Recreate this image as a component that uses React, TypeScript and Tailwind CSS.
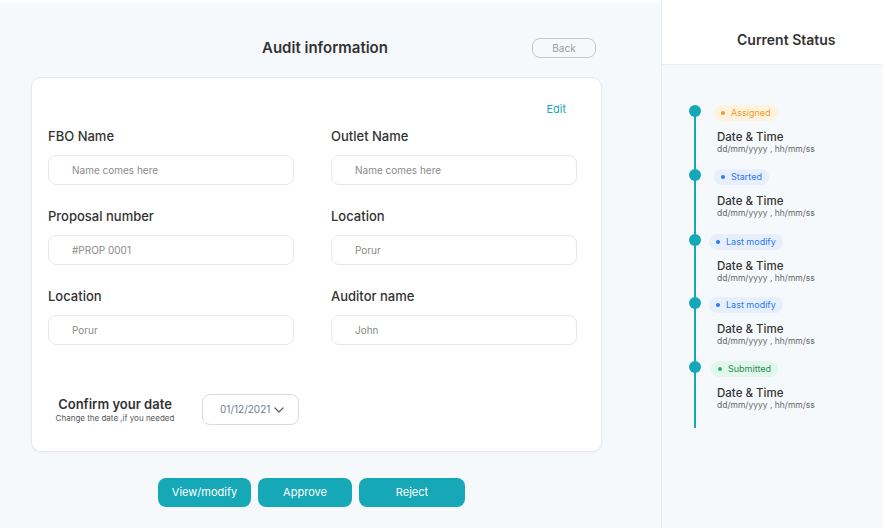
import React from 'react';

const fields = [
  { label: 'FBO Name', value: 'Name comes here' },
  { label: 'Outlet Name', value: 'Name comes here' },
  { label: 'Proposal number', value: '#PROP 0001' },
  { label: 'Location', value: 'Porur' },
  { label: 'Location', value: 'Porur' },
  { label: 'Auditor name', value: 'John' },
];

const statuses = [
  { name: 'Assigned', badge: 'bg-[#fff3de] text-[#f39a2d]', dot: 'bg-[#f39a2d]', shift: 'ml-[13px]', gap: 'h-[64px]' },
  { name: 'Started', badge: 'bg-[#e7effd] text-[#2979f2]', dot: 'bg-[#2979f2]', shift: 'ml-[13px]', gap: 'h-[65px]' },
  { name: 'Last modify', badge: 'bg-[#e7effd] text-[#2979f2]', dot: 'bg-[#2979f2]', shift: 'ml-[8px]', gap: 'h-[63px]' },
  { name: 'Last modify', badge: 'bg-[#e7effd] text-[#2979f2]', dot: 'bg-[#2979f2]', shift: 'ml-[8px]', gap: 'h-[64px]' },
  { name: 'Submitted', badge: 'bg-[#e3f6ec] text-[#1e8f55]', dot: 'bg-[#22b46a]', shift: 'ml-[10px]', gap: 'h-[64px]' },
];

const App: React.FC = () => {
  return (
    <div className="flex h-[528px] w-[883px] overflow-hidden bg-[#f6f9fc] font-['Inter',sans-serif] text-[#333]">
      {/* audit form */}
      <div className="flex w-[661px] flex-col">
        <div className="h-[5px] bg-gradient-to-b from-white to-[#f6f9fc]" />
        <div className="mt-[33px] flex h-5 items-center pl-[262px] pr-[65px]">
          <h1 className="text-[15px] font-semibold text-[#333]">Audit information</h1>
          <button className="ml-auto h-5 w-[64px] rounded-[8px] border border-[#c9c9c9] text-[10px] text-[#9a9a9a]">
            Back
          </button>
        </div>

        <div className="ml-[31px] mt-[19px] h-[375px] w-[571px] rounded-[10px] border border-[#e6e9ee] bg-white pl-[16px] pt-[25px] shadow-[0_1px_3px_rgba(0,0,0,0.04)]">
          <div className="flex h-3 justify-end pr-[35px]">
            <span className="text-[11px] leading-3 text-[#1ea6b8]">Edit</span>
          </div>
          <div className="mt-[12px] grid w-[529px] grid-cols-2 gap-x-[37px] gap-y-[22px]">
            {fields.map((f, i) => (
              <div key={i}>
                <div className="h-[18px] text-[13px] font-medium leading-[18px] text-[#333]">{f.label}</div>
                <div className="mt-[10px] flex h-[30px] items-center rounded-[8px] border border-[#e6e8ec] pl-[23px] text-[10px] text-[#8a8a8a]">
                  {f.value}
                </div>
              </div>
            ))}
          </div>

          <div className="mt-[49px] flex items-center">
            <div className="w-[134px] text-center">
              <div className="text-[13px] font-semibold leading-4 text-[#333]">Confirm your date</div>
              <div className="mt-[1px] text-[8px] leading-[10px] text-[#555]">Change the date ,if you needed</div>
            </div>
            <div className="ml-[20px] flex h-[31px] w-[97px] items-center rounded-[8px] border border-[#d5dce7] pl-[17px] pr-[14px]">
              <span className="text-[10px] text-[#737d94]">01/12/2021</span>
              <svg className="ml-auto" width="10" height="6" viewBox="0 0 10 6" fill="none">
                <path d="M1 1l4 4 4-4" stroke="#5a5f6e" strokeWidth="1.2" strokeLinecap="round" strokeLinejoin="round" />
              </svg>
            </div>
          </div>
        </div>

        <div className="ml-[158px] mt-[26px] flex gap-[7px]">
          {[
            { t: 'View/modify', w: 'w-[93px]' },
            { t: 'Approve', w: 'w-[94px]' },
            { t: 'Reject', w: 'w-[106px]' },
          ].map((b) => (
            <button key={b.t} className={`h-[29px] ${b.w} rounded-[8px] bg-[#17a8b8] text-[11px] text-white`}>
              {b.t}
            </button>
          ))}
        </div>
      </div>

      {/* status panel */}
      <div className="flex w-[222px] flex-col border-l border-[#e8ebef]">
        <div className="h-[65px] border-b border-[#eceef1] bg-white pl-[75px] pt-[31px]">
          <h2 className="text-[14px] font-semibold leading-[18px] text-[#333]">Current Status</h2>
        </div>
        <div className="relative ml-[27px] mt-[40px]">
          <div className="absolute left-[5px] top-[6px] h-[317px] w-[2px] bg-[#17a8b8]" />
          {statuses.map((s, i) => (
            <div key={i} className={`relative flex ${s.gap}`}>
              <div className="h-3 w-3 shrink-0 rounded-full bg-[#17a8b8]" />
              <div className="flex flex-col items-start">
                <div className={`${s.shift} flex h-4 items-center gap-[6px] rounded-full px-[7px] text-[9px] ${s.badge}`}>
                  <span className={`h-1 w-1 rounded-full ${s.dot}`} />
                  {s.name}
                </div>
                <div className="ml-[16px] mt-[9px] text-[11.5px] font-medium leading-[14px] text-[#333]">Date &amp; Time</div>
                <div className="ml-[16px] text-[8.5px] leading-[10px] text-[#666]">dd/mm/yyyy , hh/mm/ss</div>
              </div>
            </div>
          ))}
        </div>
      </div>
    </div>
  );
};

export default App;
